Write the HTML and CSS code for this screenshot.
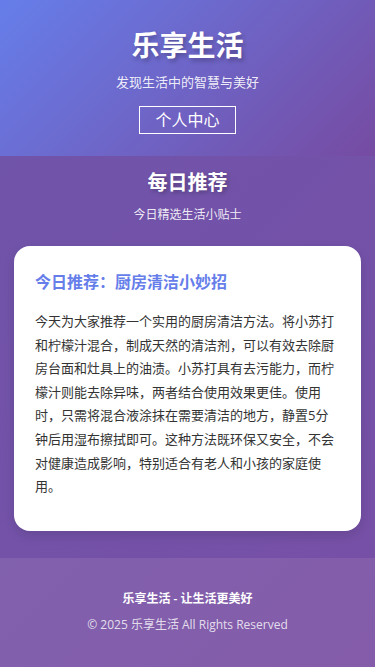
FILE: index.html
```html
<!DOCTYPE html>
<html lang="zh-CN">
<head>
<meta charset="UTF-8">
<meta name="viewport" content="width=device-width,initial-scale=1.0">
<title>乐享生活</title>
<link rel="stylesheet" href="styles.css">
</head>
<body>

<header class="top">
  <h1 class="brand">乐享生活</h1>
  <div class="slogan">发现生活中的智慧与美好</div>
  <a class="user-btn" href="#">个人中心</a>
</header>

<main class="daily">
  <h2>每日推荐</h2>
  <div class="daily-sub">今日精选生活小贴士</div>

  <article class="tip-card">
    <h3>今日推荐：厨房清洁小妙招</h3>
    <p>今天为大家推荐一个实用的厨房清洁方法。将小苏打和柠檬汁混合，制成天然的清洁剂，可以有效去除厨房台面和灶具上的油渍。小苏打具有去污能力，而柠檬汁则能去除异味，两者结合使用效果更佳。使用时，只需将混合液涂抹在需要清洁的地方，静置5分钟后用湿布擦拭即可。这种方法既环保又安全，不会对健康造成影响，特别适合有老人和小孩的家庭使用。</p>
  </article>
</main>

<footer class="foot">
  <div class="foot-motto">乐享生活 - 让生活更美好</div>
  <div class="foot-copy">© 2025 乐享生活 All Rights Reserved</div>
</footer>

</body>
</html>
```

FILE: styles.css
```css
html,body{
  margin:0;
  padding:0;
}
body{
  background:#8360ad;
  color:#fff;
  font-family:"Open Sans","Noto Sans CJK SC",sans-serif;
  min-height:100vh;
}

/* ----------  HEADER  ---------- */
.top{
  text-align:center;
  padding:28px 0 22px;
  background:linear-gradient(135deg,#667eea 0%,#764ba2 100%);
  box-shadow:0 1px 3px rgba(0,0,0,.12);
}
.brand{
  margin:0;
  font-size:28px;
  line-height:34px;
  font-weight:700;
  text-shadow:2px 3px 4px rgba(0,0,0,.25);
}
.slogan{
  margin-top:10px;
  font-size:13px;
  line-height:20px;
  color:rgba(255,255,255,.9);
}
.user-btn{
  display:inline-block;
  margin-top:14px;
  padding:0 15px;
  border:1px solid #fff;
  font-size:16px;
  line-height:26px;
  color:#fff;
  text-decoration:none;
}

/* ----------  DAILY  ---------- */
.daily{
  text-align:center;
  padding:13px 14px 27px;
  background:linear-gradient(135deg,#7054aa 0%,#7650a6 100%);
}
.daily h2{
  margin:0;
  font-size:20px;
  line-height:28px;
  font-weight:700;
  text-shadow:2px 2px 4px rgba(0,0,0,.25);
}
.daily-sub{
  margin-top:9px;
  font-size:12px;
  line-height:18px;
  color:rgba(255,255,255,.9);
}

.tip-card{
  margin-top:22px;
  background:#fff;
  border-radius:16px;
  padding:24px 21px 32px;
  text-align:left;
  box-shadow:0 4px 12px rgba(0,0,0,.12);
}
.tip-card h3{
  margin:0;
  font-size:16px;
  line-height:24px;
  font-weight:700;
  color:#667eea;
}
.tip-card p{
  margin:16px 0 0;
  font-size:13px;
  line-height:23.6px;
  color:#333;
}

/* ----------  FOOTER  ---------- */
.foot{
  text-align:center;
  padding:32px 0 36px;
  background:linear-gradient(135deg,#8160ae 0%,#845ca9 100%);
}
.foot-motto{
  font-size:12px;
  line-height:18px;
  font-weight:600;
}
.foot-copy{
  margin-top:8px;
  font-size:12px;
  line-height:18px;
  color:rgba(255,255,255,.8);
}
```
